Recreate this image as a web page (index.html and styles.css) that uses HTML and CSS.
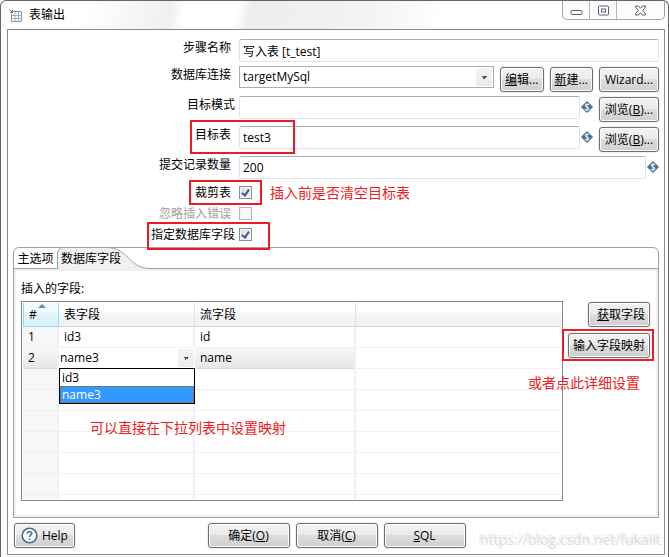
FILE: index.html
```html
<!DOCTYPE html>
<html lang="zh-CN">
<head>
    <meta charset="UTF-8">
    <meta name="viewport" content="width=device-width, initial-scale=1.0">
    <title>表输出</title>
    <link rel="stylesheet" href="styles.css">
</head>
<body>
    <svg width="0" height="0" class="symbols" aria-hidden="true">
        <symbol id="var" viewBox="0 0 12 12">
            <path d="M6 0.5 L11.5 6 L6 11.5 L0.5 6 Z" fill="#44708f" stroke="#44708f" stroke-linejoin="round"/>
            <path d="M8 3.8 C7.4 2.9 4.4 2.7 4.3 4.5 C4.3 6.2 7.9 5.6 7.8 7.6 C7.7 9.3 4.6 9.1 3.9 8.1 M6 2.2 V9.9" fill="none" stroke="#e4edf3" stroke-width="1.1"/>
        </symbol>
    </svg>

    <div class="window">
        <header class="titlebar">
            <svg class="app-icon" width="13" height="13" viewBox="0 0 13 13" fill="none" stroke="#7896ad">
                <path d="M4.5 2.5 H12.5 V12.5 H2.5 V5"/>
                <path d="M3 6.5 H12 M3 9.5 H12 M6 3 V12 M9.5 3 V12" stroke="#9db3c4"/>
                <path d="M0.5 0.5 L3.5 3.5 M3.5 1 V3.5 H1" stroke="#4c6f8b"/>
            </svg>
            <h1>表输出</h1>
            <div class="controls">
                <button type="button" aria-label="最小化">
                    <svg width="13" height="11" viewBox="0 0 13 11"><rect x="1" y="5.5" width="11" height="4" rx="1" fill="#fff" stroke="#5b5d6e"/></svg>
                </button>
                <button type="button" aria-label="最大化">
                    <svg width="13" height="11" viewBox="0 0 13 11"><rect x="1.5" y="1" width="10" height="9" rx="1" fill="#fff" stroke="#5b5d6e"/><rect x="4.5" y="4" width="4" height="3" fill="#fff" stroke="#5b5d6e"/></svg>
                </button>
                <button type="button" class="close" aria-label="关闭">
                    <svg width="13" height="11" viewBox="0 0 13 11"><path d="M1.5 1 H4.5 L6.5 3.3 L8.5 1 H11.5 V2 L8.7 5.5 L11.5 9 V10 H8.5 L6.5 7.7 L4.5 10 H1.5 V9 L4.3 5.5 L1.5 2 Z" fill="#fff" stroke="#5b5d6e"/></svg>
                </button>
            </div>
        </header>

        <main class="client">
            <form class="form">
                <div class="row">
                    <label for="step">步骤名称</label>
                    <input type="text" id="step" value="写入表 [t_test]">
                </div>
                <div class="row">
                    <label for="conn">数据库连接</label>
                    <select id="conn" class="combo"><option>targetMySql</option></select>
                    <div class="buttons">
                        <button type="button" class="btn"><u>编</u>辑...</button>
                        <button type="button" class="btn"><u>新</u>建...</button>
                        <button type="button" class="btn btn-wide">Wizard...</button>
                    </div>
                </div>
                <div class="row">
                    <label for="schema" class="near">目标模式</label>
                    <input type="text" id="schema">
                    <svg class="var"><use href="#var"/></svg>
                    <div class="buttons">
                        <button type="button" class="btn btn-wide">浏览(<u>B</u>)...</button>
                    </div>
                </div>
                <div class="row">
                    <label for="table">目标表</label>
                    <input type="text" id="table" value="test3">
                    <svg class="var"><use href="#var"/></svg>
                    <div class="buttons">
                        <button type="button" class="btn btn-wide">浏览(<u>B</u>)...</button>
                    </div>
                    <span class="mark mark-table"></span>
                </div>
                <div class="row">
                    <label for="commit">提交记录数量</label>
                    <input type="text" id="commit" value="200">
                    <svg class="var"><use href="#var"/></svg>
                </div>
                <div class="checks">
                    <div class="row">
                        <label for="truncate">裁剪表</label>
                        <input type="checkbox" id="truncate" checked>
                        <span class="note note-truncate">插入前是否清空目标表</span>
                        <span class="mark mark-truncate"></span>
                    </div>
                    <div class="row disabled">
                        <label for="ignore">忽略插入错误</label>
                        <input type="checkbox" id="ignore" disabled>
                    </div>
                    <div class="row">
                        <label for="fields" class="near">指定数据库字段</label>
                        <input type="checkbox" id="fields" checked>
                        <span class="mark mark-fields"></span>
                    </div>
                </div>
            </form>

            <section class="folder">
                <div class="tabs" role="tablist">
                    <button type="button" class="tab" role="tab">主选项</button>
                    <button type="button" class="tab active" role="tab" aria-selected="true">
                        <svg width="91" height="22" viewBox="0 0 91 22">
                            <path d="M0.5 22 V6 Q1 1 6 0.5 H52 C70 1 73 21 91 21.5 V22 Z" fill="#f0f0f0"/>
                            <path d="M0.5 22 V6 Q1 1 6 0.5 H52 C70 1 73 21 91 21.5" fill="none" stroke="#a0a0a0"/>
                        </svg>
                        <span>数据库字段</span>
                    </button>
                </div>
                <div class="panel">
                    <p class="caption">插入的字段:</p>
                    <div class="content">
                        <div class="grid">
                            <table>
                                <colgroup><col class="c-num"><col class="c-table"><col class="c-stream"><col></colgroup>
                                <thead>
                                    <tr><th class="sorted">#</th><th>表字段</th><th>流字段</th><th></th></tr>
                                </thead>
                                <tbody>
                                    <tr><td>1</td><td>id3</td><td>id</td><td></td></tr>
                                    <tr class="selected">
                                        <td>2</td>
                                        <td class="editor">
                                            <select class="combo" aria-label="表字段"><option>name3</option></select>
                                            <ul class="list" role="listbox">
                                                <li role="option">id3</li>
                                                <li role="option" class="current" aria-selected="true">name3</li>
                                            </ul>
                                        </td>
                                        <td>name</td>
                                        <td></td>
                                    </tr>
                                    <tr><td></td><td></td><td></td><td></td></tr>
                                    <tr><td></td><td></td><td></td><td></td></tr>
                                    <tr><td></td><td></td><td></td><td></td></tr>
                                    <tr><td></td><td></td><td></td><td></td></tr>
                                    <tr><td></td><td></td><td></td><td></td></tr>
                                    <tr><td></td><td></td><td></td><td></td></tr>
                                    <tr class="rest"><td></td><td></td><td></td><td></td></tr>
                                </tbody>
                            </table>
                            <span class="note note-list">可以直接在下拉列表中设置映射</span>
                        </div>
                        <div class="side">
                            <button type="button" class="btn btn-get"><u>获</u>取字段</button>
                            <div class="marked">
                                <button type="button" class="btn">输入字段映射</button>
                                <span class="mark mark-map"></span>
                            </div>
                            <span class="note note-map">或者点此详细设置</span>
                        </div>
                    </div>
                </div>
            </section>

            <footer class="footer">
                <button type="button" class="btn btn-help">
                    <svg width="17" height="17" viewBox="0 0 17 17" fill="none" stroke="#44708f">
                        <circle cx="8.5" cy="8.5" r="7.3" fill="#fff" stroke-width="1.6"/>
                        <path d="M6.2 6.8 C6.2 3.7 10.9 3.9 10.8 6.6 C10.7 8.2 8.6 8.2 8.6 10" stroke-width="1.5"/>
                        <path d="M8.6 11.3 V12.9" stroke-width="1.6"/>
                    </svg>
                    Help
                </button>
                <div class="actions">
                    <button type="button" class="btn">确定(<u>O</u>)</button>
                    <button type="button" class="btn">取消(<u>C</u>)</button>
                    <button type="button" class="btn"><u>S</u>QL</button>
                </div>
                <span class="watermark">https://blog.csdn.net/fukaiit</span>
            </footer>
        </main>
    </div>
</body>
</html>
```

FILE: styles.css
```css
* { margin: 0; padding: 0; box-sizing: border-box; }

body {
    font-family: "Open Sans", "Noto Sans CJK SC", sans-serif;
    font-size: 12px;
    line-height: 18px;
    color: #000;
    background: #fff;
}

button, input, select {
    font: inherit;
    color: inherit;
}

.symbols {
    position: absolute;
}

/* window frame */
.window {
    border: 1px solid #666;
    border-bottom: 0;
    border-radius: 6px 6px 0 0;
    padding: 0 3px 3px 6px;
    background: #fcfcfc;
}

.titlebar {
    display: flex;
    align-items: center;
    height: 28px;
    padding-left: 2px;
    background: linear-gradient(100deg, #fff 12%, #efefef 25%, #fff 27%, #fff 35%, #ededed 37%, #f3f3f3 55%, #fff 66%, #fff);
}

.titlebar h1 {
    font-size: 12px;
    font-weight: normal;
    margin-left: 7px;
}

.controls {
    display: flex;
    align-self: flex-start;
    margin-left: auto;
    border: 1px solid #a5a5a8;
    border-top: 0;
    border-radius: 0 0 5px 5px;
    background: #fcfcfc;
}

.controls button {
    display: flex;
    align-items: center;
    justify-content: center;
    width: 27px;
    height: 18px;
    border: 0;
    border-right: 1px solid #b5b5b8;
    background: none;
}

.controls .close {
    width: 47px;
    border-right: 0;
}

.client {
    border: 1px solid #8a8a8a;
    background: #fff;
    padding: 9px 5px 6px;
}

/* form rows */
.form {
    display: flex;
    flex-direction: column;
    gap: 4px;
}

.row {
    display: flex;
    align-items: flex-start;
    position: relative;
}

.row label {
    flex: none;
    width: 226px;
    padding-right: 8px;
    text-align: right;
}

.row .near {
    padding-right: 4px;
}

input[type="text"] {
    flex: 1;
    min-width: 0;
    height: 23px;
    padding: 0 3px;
    border: 1px solid #e2e3ea;
    border-top-color: #abadb3;
    border-radius: 2px;
    background: #fff;
}

.combo {
    flex: 1;
    min-width: 0;
    height: 22px;
    padding: 0 3px;
    appearance: none;
    border: 1px solid #abadb3;
    border-radius: 0;
    background:
        linear-gradient(45deg, transparent 50%, #555 50%) right 9px center / 3px 3px no-repeat,
        linear-gradient(-45deg, transparent 50%, #555 50%) right 6px center / 3px 3px no-repeat,
        linear-gradient(#f4f4f4, #ebebeb) right 1px center / 16px 18px no-repeat,
        #fff;
}

.var {
    flex: none;
    width: 12px;
    height: 12px;
    margin: 5px 0 0 1px;
}

.buttons {
    display: flex;
    gap: 6px;
    margin-left: 6px;
}

.btn {
    display: flex;
    align-items: center;
    justify-content: center;
    height: 25px;
    min-width: 43px;
    margin-top: 1px;
    padding: 0 4px;
    border: 1px solid #707070;
    border-radius: 3px;
    box-shadow: 0 0 0 1px #f0f0f0, inset 0 0 0 1px #fafafa;
    background: linear-gradient(#f2f2f2, #ebebeb 48%, #dddddd 50%, #cfcfcf);
    white-space: nowrap;
}

.btn-wide {
    min-width: 60px;
}

.checks {
    display: flex;
    flex-direction: column;
    gap: 3px;
    margin-top: 1px;
}

input[type="checkbox"] {
    flex: none;
    appearance: none;
    width: 13px;
    height: 13px;
    margin-top: 2px;
    border: 1px solid #8e8f8f;
    background: linear-gradient(135deg, #d6d9de, #fbfbfb);
    box-shadow: inset 0 0 0 1px #f4f4f4;
}

input[type="checkbox"]:checked::after {
    content: "";
    display: block;
    width: 3px;
    height: 6px;
    margin: 1px 0 0 3px;
    border: solid #3f5698;
    border-width: 0 2px 2px 0;
    transform: rotate(35deg);
}

.disabled {
    color: #a0a0a0;
}

.disabled input[type="checkbox"] {
    border-color: #b8b8b8;
    background: #fafafa;
}

/* red annotations */
.note {
    color: #ed1c24;
    font-size: 14px;
    white-space: nowrap;
}

.note-truncate {
    margin-left: 18px;
}

.note-list {
    position: absolute;
    left: 68px;
    top: 117px;
}

.note-map {
    position: absolute;
    right: 11px;
    top: 73px;
}

.mark {
    position: absolute;
    border: 2px solid #ed1c24;
    pointer-events: none;
}

.mark-table {
    left: 177px;
    top: -6px;
    width: 105px;
    height: 34px;
}

.mark-truncate {
    left: 176px;
    top: -4px;
    width: 73px;
    height: 25px;
}

.mark-fields {
    left: 134px;
    top: -4px;
    width: 123px;
    height: 28px;
    z-index: 1;
}

.mark-map {
    inset: -3px -4px -3px -6px;
}

/* tab folder */
.folder {
    margin-top: 3px;
    border: 1px solid #a0a0a0;
    border-radius: 6px 6px 0 0;
}

.tabs {
    display: flex;
    height: 21px;
    border-bottom: 1px solid #a0a0a0;
}

.tab {
    height: 21px;
    width: 43px;
    border: 0;
    background: none;
    white-space: nowrap;
}

.active {
    position: relative;
    width: 91px;
    text-align: left;
    padding-left: 4px;
}

.active svg {
    position: absolute;
    left: 0;
    top: -1px;
}

.active span {
    position: relative;
}

.panel {
    border: 2px solid #f0f0f0;
    padding: 9px 5px 14px;
}

.caption {
    margin-bottom: 3px;
}

.content {
    display: flex;
}

.grid {
    flex: 1;
    position: relative;
    border: 1px solid #828790;
    padding: 1px;
}

table {
    width: 100%;
    table-layout: fixed;
    border-collapse: separate;
    border-spacing: 0;
}

.c-num { width: 36px; }
.c-table { width: 136px; }
.c-stream { width: 161px; }

th {
    height: 24px;
    padding-left: 5px;
    font-weight: normal;
    text-align: left;
    border-right: 1px solid #dfe0e2;
    border-bottom: 1px solid #d5d5d5;
    background: linear-gradient(#fff 40%, #f4f5f7 42%, #f0f1f3);
}

th:last-child, td:last-child {
    border-right: 0;
}

.sorted {
    position: relative;
    border: 1px solid #96d9f9;
    border-top: 0;
    background: linear-gradient(#f4fbfe 40%, #e4f4fc 42%, #d9f0fb);
}

/* sort arrow */
.sorted::before {
    content: "";
    position: absolute;
    left: 14px;
    top: 1px;
    border: solid transparent;
    border-width: 0 4px 4px;
    border-bottom-color: #5b93b3;
}

td {
    height: 21px;
    padding-left: 5px;
    line-height: 18px;
    border-right: 2px solid #eef1f8;
    border-bottom: 1px solid #f0f0f0;
}

td:first-child {
    background: #f7f7f7;
}

.rest td {
    height: 4px;
    border-bottom: 0;
}

.selected td:first-child, .selected td:nth-child(3) {
    border-bottom-color: #d9d9d9;
    border-radius: 2px;
    background: linear-gradient(#f8f8f8, #e6e6e6);
}

.selected .editor {
    position: relative;
    padding: 0;
    border-right: 0;
}

.editor .combo {
    display: block;
    width: 100%;
    height: 20px;
    padding: 0 1px;
    border: 0;
}

.list {
    position: absolute;
    z-index: 1;
    left: 0;
    top: 20px;
    width: 136px;
    border: 1px solid #000;
    background: #fff;
    list-style: none;
}

.list li {
    height: 17px;
    padding: 0 2px;
    line-height: 17px;
}

.list .current {
    color: #fff;
    background: #3399ff;
    outline: 1px dotted #a06020;
    outline-offset: -1px;
}

.side {
    position: relative;
    display: flex;
    flex-direction: column;
    align-items: flex-end;
    gap: 5px;
    flex: none;
    width: 88px;
    padding-right: 1px;
}

.side .btn-get {
    padding: 0 4px 0 8px;
}

.marked {
    position: relative;
}

/* bottom bar */
.footer {
    display: grid;
    grid-template-columns: 1fr auto 1fr;
    position: relative;
    margin-top: 4px;
    padding-left: 1px;
}

.btn-help {
    justify-self: start;
    gap: 4px;
    padding: 0 6px;
}

.actions {
    display: flex;
    gap: 6px;
}

.actions .btn {
    width: 82px;
}

.watermark {
    position: absolute;
    right: -2px;
    bottom: -1px;
    font-size: 14px;
    color: #dcdcdc;
    text-shadow: -2px -2px 0 #eee;
}
```
